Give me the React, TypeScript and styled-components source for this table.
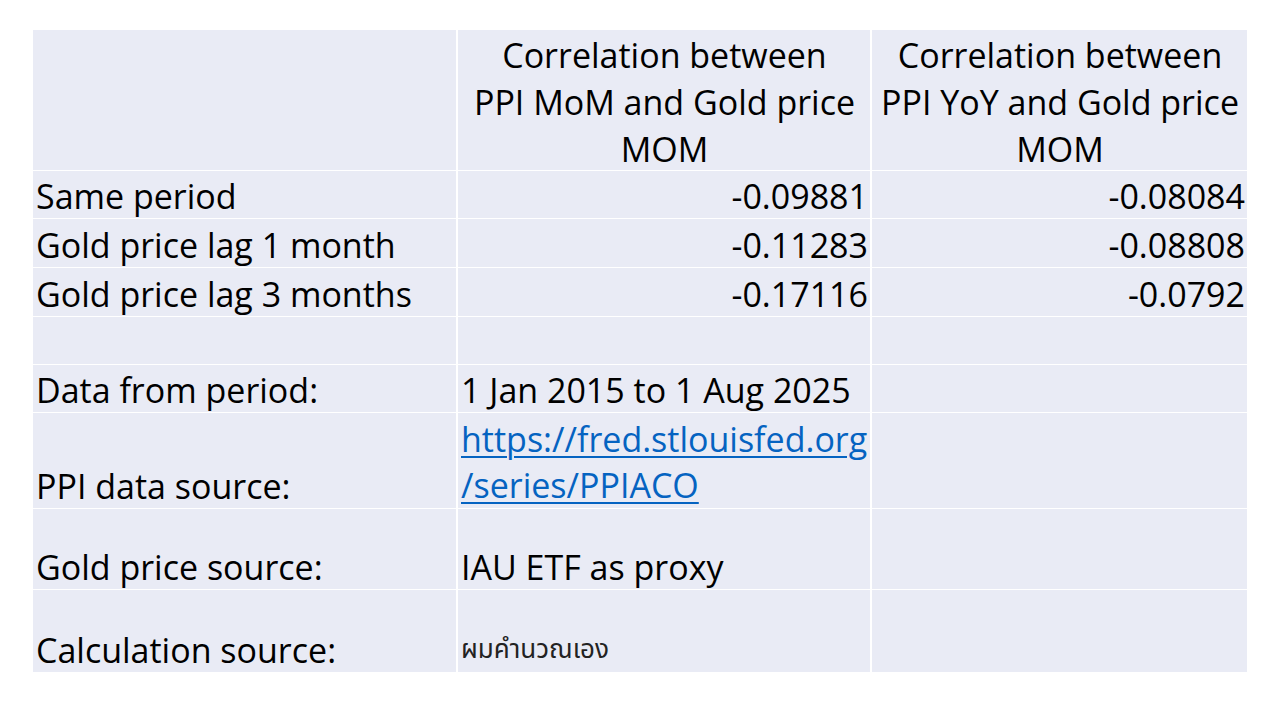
import styled, { createGlobalStyle } from 'styled-components'

const GlobalStyle = createGlobalStyle`
  html, body {
    margin: 0;
    padding: 0;
    background: #ffffff;
  }
  body {
    font-family: 'Open Sans', 'Noto Sans', sans-serif;
    color: #000000;
  }
`

const Page = styled.div`
  width: 1280px;
  height: 720px;
  padding: 30px 0 0 33px;
  box-sizing: border-box;
`

const Sheet = styled.div`
  display: grid;
  grid-template-columns: 423px 412px 375px;
  grid-template-rows: 140px 47px 48px 48px 47px 47px 95px 80px 82px;
  column-gap: 2px;
  row-gap: 1px;
  width: 1214px;
  background: #ffffff;
`

const Cell = styled.div<{ align?: 'left' | 'right' | 'center' }>`
  background: #e9ebf5;
  display: flex;
  flex-direction: column;
  justify-content: flex-end;
  align-items: ${(p) =>
    p.align === 'right' ? 'flex-end' : p.align === 'center' ? 'center' : 'flex-start'};
  text-align: ${(p) => p.align ?? 'left'};
  padding: 0 2px 0 3px;
  font-size: 34px;
  line-height: 44px;
  white-space: nowrap;
`

const HeaderCell = styled(Cell)`
  justify-content: flex-start;
  padding-top: 2px;
  line-height: 47px;
`

const Link = styled.a`
  color: #0563c1;
  line-height: 46px;
  text-decoration: underline;
  text-underline-offset: 4px;
  text-decoration-thickness: 2px;
`

const ThaiText = styled.span`
  font-family: 'Noto Sans Thai', 'DejaVu Sans', 'Noto Sans', sans-serif;
  font-size: 26px;
  line-height: 44px;
  color: #222;
`

const rows: [string, string, string][] = [
  ['Same period', '-0.09881', '-0.08084'],
  ['Gold price lag 1 month', '-0.11283', '-0.08808'],
  ['Gold price lag 3 months', '-0.17116', '-0.0792'],
]

export default function App() {
  return (
    <Page>
      <GlobalStyle />
      <Sheet>
        <HeaderCell />
        <HeaderCell align="center">
          Correlation between
          <br />
          PPI MoM and Gold price
          <br />
          MOM
        </HeaderCell>
        <HeaderCell align="center">
          Correlation between
          <br />
          PPI YoY and Gold price
          <br />
          MOM
        </HeaderCell>

        {rows.map(([label, a, b]) => (
          <>
            <Cell key={label}>{label}</Cell>
            <Cell align="right">{a}</Cell>
            <Cell align="right">{b}</Cell>
          </>
        ))}

        <Cell />
        <Cell />
        <Cell />

        <Cell>Data from period:</Cell>
        <Cell>1 Jan 2015 to 1 Aug 2025</Cell>
        <Cell />

        <Cell>PPI data source:</Cell>
        <Cell>
          <Link href="#">
            https://fred.stlouisfed.org
            <br />
            /series/PPIACO
          </Link>
        </Cell>
        <Cell />

        <Cell>Gold price source:</Cell>
        <Cell>IAU ETF as proxy</Cell>
        <Cell />

        <Cell>Calculation source:</Cell>
        <Cell>
          <ThaiText>ผมคำนวณเอง</ThaiText>
        </Cell>
        <Cell />
      </Sheet>
    </Page>
  )
}
